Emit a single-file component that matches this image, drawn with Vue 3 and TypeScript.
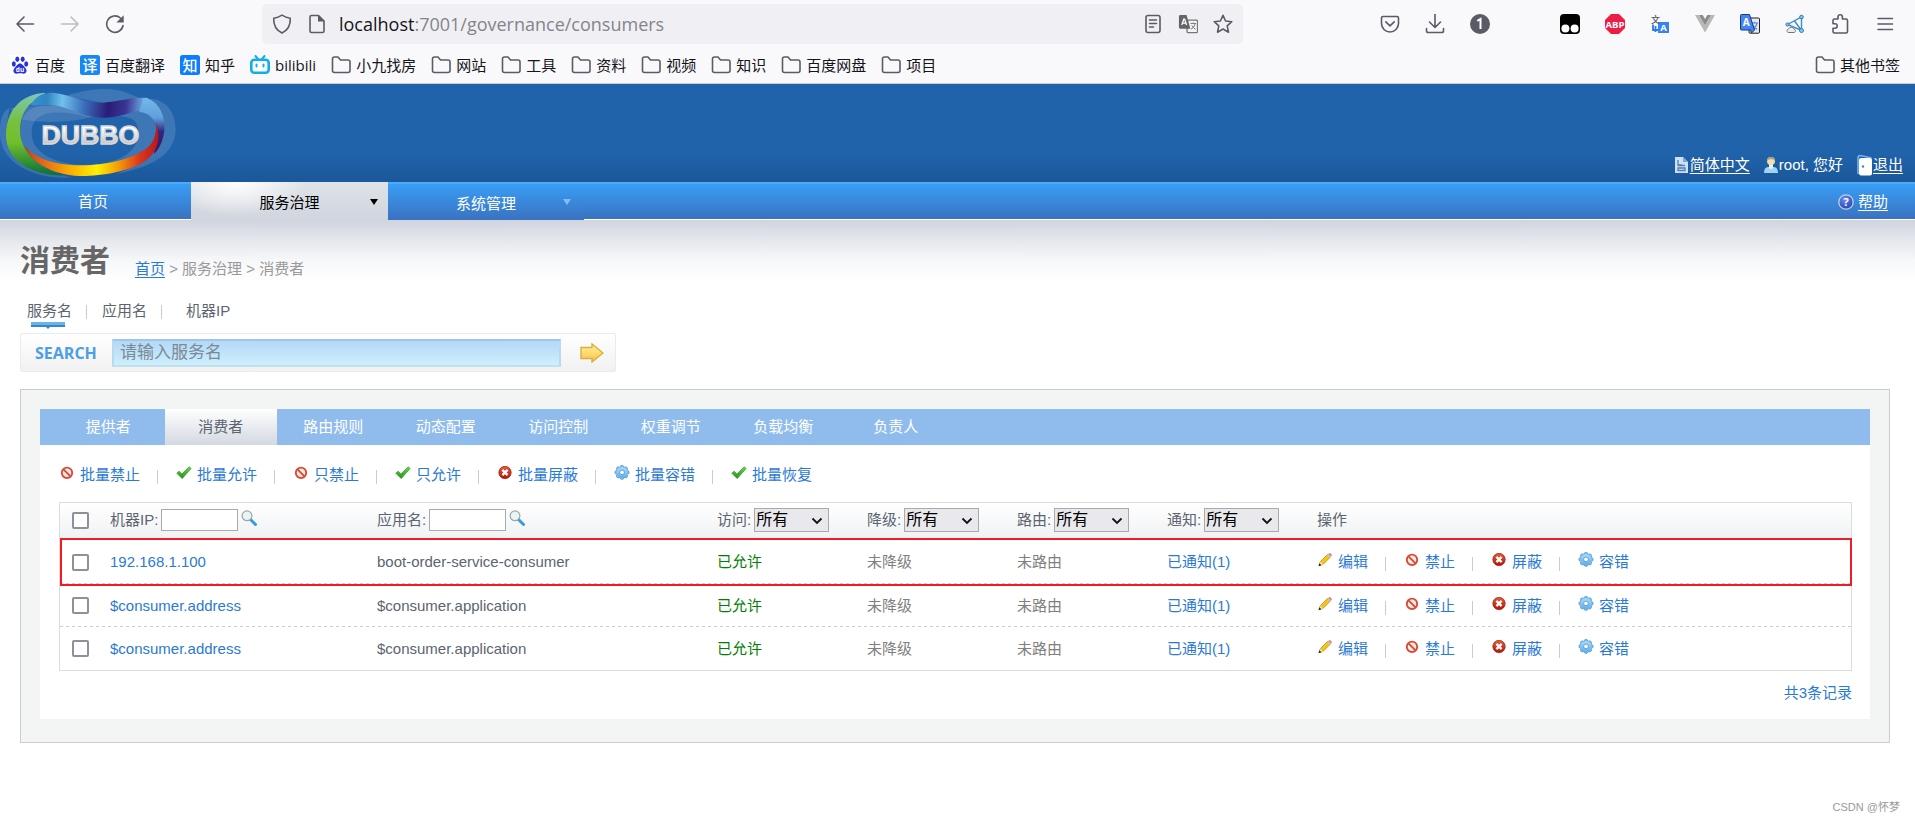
<script setup lang="ts">
import { ref } from 'vue'

interface Bookmark { label: string; icon: string }
interface Action { label: string; icon: string }
interface Consumer { address: string; application: string; marked: boolean }
interface Glyph { text: string; x: number; y: number; size: number; fill: string; cls: string }

const bookmarks: Bookmark[] = [
  { label: '百度', icon: 'baidu' },
  { label: '百度翻译', icon: 'fanyi' },
  { label: '知乎', icon: 'zhihu' },
  { label: 'bilibili', icon: 'bili' },
  { label: '小九找房', icon: 'folder' },
  { label: '网站', icon: 'folder' },
  { label: '工具', icon: 'folder' },
  { label: '资料', icon: 'folder' },
  { label: '视频', icon: 'folder' },
  { label: '知识', icon: 'folder' },
  { label: '百度网盘', icon: 'folder' },
  { label: '项目', icon: 'folder' },
]

const extensions: Action[] = [
  { label: 'Pocket', icon: 'pocket' },
  { label: '下载', icon: 'download' },
  { label: '账户', icon: 'account' },
  { label: '', icon: '' },
  { label: 'Tampermonkey', icon: 'monkey' },
  { label: 'Adblock Plus', icon: 'abp' },
  { label: '划词翻译', icon: 'lookup' },
  { label: 'Vue', icon: 'vue' },
  { label: '谷歌翻译', icon: 'gtrans' },
  { label: '网络', icon: 'network' },
  { label: '扩展', icon: 'puzzle' },
  { label: '菜单', icon: 'menu' },
]

// Lettering drawn on top of an icon's shape, in its 20×20 box
const glyphs: Record<string, Glyph[]> = {
  abp: [{ text: 'ABP', x: 10, y: 13.5, size: 9.5, fill: '#fff', cls: 'glyph' }],
  lookup: [
    { text: '文', x: 5.5, y: 9, size: 9, fill: '#555', cls: 'cjk' },
    { text: 'A', x: 13.5, y: 17, size: 9.5, fill: '#fff', cls: 'glyph' },
  ],
  gtrans: [{ text: 'A', x: 6.3, y: 12, size: 10, fill: '#fff', cls: 'glyph' }],
  baidu: [{ text: 'du', x: 10, y: 17, size: 6.5, fill: '#fff', cls: 'glyph' }],
  fanyi: [{ text: '译', x: 10, y: 15.5, size: 15, fill: '#fff', cls: 'cjk' }],
  zhihu: [{ text: '知', x: 10, y: 15.5, size: 15, fill: '#fff', cls: 'cjk' }],
}

const tabs = ['提供者', '消费者', '路由规则', '动态配置', '访问控制', '权重调节', '负载均衡', '负责人']
const activeTab = ref('消费者')

const batch: Action[] = [
  { label: '批量禁止', icon: 'ban' },
  { label: '批量允许', icon: 'tick' },
  { label: '只禁止', icon: 'ban' },
  { label: '只允许', icon: 'tick' },
  { label: '批量屏蔽', icon: 'cross' },
  { label: '批量容错', icon: 'gear' },
  { label: '批量恢复', icon: 'tick' },
]

const rowActions: Action[] = [
  { label: '编辑', icon: 'pencil' },
  { label: '禁止', icon: 'ban' },
  { label: '屏蔽', icon: 'cross' },
  { label: '容错', icon: 'gear' },
]

const textFilters = [
  { id: 'f-ip', label: '机器IP:' },
  { id: 'f-app', label: '应用名:' },
]
const selectFilters = [
  { id: 'f-access', label: '访问:' },
  { id: 'f-mock', label: '降级:' },
  { id: 'f-route', label: '路由:' },
  { id: 'f-notify', label: '通知:' },
]

const rows: Consumer[] = [
  { address: '192.168.1.100', application: 'boot-order-service-consumer', marked: true },
  { address: '$consumer.address', application: '$consumer.application', marked: false },
  { address: '$consumer.address', application: '$consumer.application', marked: false },
]

const keyword = ref('')
const url = { host: 'localhost', rest: ':7001/governance/consumers' }
</script>

<template>
  <svg class="sprite" aria-hidden="true">
    <defs>
      <linearGradient id="g-tick" x1="0" y1="0" x2="0" y2="1"><stop offset="0" stop-color="#6fdc4c" /><stop offset="1" stop-color="#1f8f1c" /></linearGradient>
      <linearGradient id="g-cross" x1="0" y1="0" x2="0" y2="1"><stop offset="0" stop-color="#e2603a" /><stop offset="1" stop-color="#b01508" /></linearGradient>
      <linearGradient id="g-gear" x1="0" y1="0" x2="0" y2="1"><stop offset="0" stop-color="#a9dbfb" /><stop offset="1" stop-color="#62aee8" /></linearGradient>
      <linearGradient id="g-arrow" x1="0" y1="0" x2="0" y2="1"><stop offset="0" stop-color="#ffef9a" /><stop offset=".6" stop-color="#ffd768" /><stop offset="1" stop-color="#ffb066" /></linearGradient>
      <radialGradient id="g-help" cx=".4" cy=".3" r=".8"><stop offset="0" stop-color="#6f8cf0" /><stop offset="1" stop-color="#1c3cae" /></radialGradient>
    </defs>
    <symbol id="i-back" viewBox="0 0 20 20"><path d="M18.500 10H2M9 3L2 10l7 7" class="ln" /></symbol>
    <symbol id="i-forward" viewBox="0 0 20 20"><path d="M1.500 10H18M11 3l7 7-7 7" class="ln" /></symbol>
    <symbol id="i-reload" viewBox="0 0 20 20"><path d="M18 11.500a8.200 8.200 0 1 1-2.600-7.500" class="ln" /><path d="M18.700 1.200v7.300h-7.300z" fill="currentColor" /></symbol>
    <symbol id="i-shield" viewBox="0 0 20 20"><path d="M10 1.200c2.500 1.600 5.200 2.600 8.300 3 .3 6.300-1.800 11.500-8.300 14.800C3.500 15.700 1.400 10.500 1.700 4.200c3.100-.4 5.800-1.400 8.300-3z" class="ln" /></symbol>
    <symbol id="i-page" viewBox="0 0 20 20"><path d="M4.500 1.500h7L17 7v10q0 1.500-1.500 1.500h-11Q3 18.500 3 17V3q0-1.500 1.500-1.500z" class="ln" /><path d="M11 1v6.500h6.500z" fill="currentColor" /></symbol>
    <symbol id="i-reader" viewBox="0 0 20 20"><rect x="3" y="1.500" width="14" height="17" rx="2" class="ln" /><path d="M6.500 6h7M6.500 9.500h7M6.500 13h4" class="ln" /></symbol>
    <symbol id="i-translate" viewBox="0 0 21 20">
      <rect x="9.500" y="6" width="11" height="13" rx="1" fill="#f4f4f6" stroke="#77777b" stroke-width="1.400" />
      <path d="M1 2q0-1.500 1.500-1.500H9L13 15H2.500Q1 15 1 13.500z" fill="#646468" />
      <path d="M4 11L6 5h1l2 6M4.700 9h3.500" fill="none" stroke="#fff" stroke-width="1.300" />
      <path d="M13 9.500h6M16 8.500v1M18 10q-1 4-4.500 5.500M14.500 11.500q1.500 3 4 4" fill="none" stroke="#77777b" />
    </symbol>
    <symbol id="i-star" viewBox="0 0 20 20"><path d="M10 1.300l2.600 5.700 6.200.7-4.600 4.200 1.300 6.300-5.500-3.200-5.500 3.200 1.300-6.300L1.200 7.700l6.200-.7z" class="ln" /></symbol>
    <symbol id="i-pocket" viewBox="0 0 20 20"><path d="M3 2.500h14q1.500 0 1.500 1.500v5.500a8.500 8.500 0 0 1-17 0V4Q1.500 2.500 3 2.500z" class="ln" /><path d="M5.800 7.800L10 11.800l4.200-4" class="ln" /></symbol>
    <symbol id="i-download" viewBox="0 0 20 20"><path d="M10 0v13M4.500 8L10 13.500 15.500 8M1.500 14.500v2.200q0 1.800 1.800 1.800h13.400q1.800 0 1.800-1.800v-2.200" class="ln" /></symbol>
    <symbol id="i-account" viewBox="0 0 20 20"><circle cx="10" cy="10" r="10" fill="#5b5b66" /><path d="M7.300 6.900L10.500 5v10" fill="none" stroke="#fff" stroke-width="2" /></symbol>
    <symbol id="i-monkey" viewBox="0 0 20 20"><rect width="20" height="20" rx="4" fill="#000" /><circle cx="5.400" cy="14.500" r="4" fill="#fff" /><circle cx="14.600" cy="14.500" r="4" fill="#fff" /></symbol>
    <symbol id="i-abp" viewBox="0 0 20 20"><path d="M6 0h8l6 6v8l-6 6H6l-6-6V6z" fill="#ed1e45" /></symbol>
    <symbol id="i-lookup" viewBox="0 0 20 20"><path d="M3 10.500v5.500h5M5.500 12v6" fill="none" stroke="#3178e8" stroke-width="1.800" /><rect x="8" y="8" width="11" height="11" fill="#3584f0" /></symbol>
    <symbol id="i-vue" viewBox="0 0 20 20"><path d="M0 1h4l6 10.300L16 1h4L10 18.500z" fill="#b8b8b8" /><path d="M4 1h3.700L10 5l2.300-4H16l-6 10.300z" fill="#8b8b8b" /></symbol>
    <symbol id="i-gtrans" viewBox="0 0 20 20"><rect x="9" y="4" width="10.500" height="15.200" rx="1" fill="#e9e9ec" stroke="#222" /><path d="M11 9h7M14.500 7.800V9M17 9.500q-1 4-4.500 6M12.700 11q1.500 3 4.500 4.500" fill="none" stroke="#4a84ee" stroke-width="1.200" /><path d="M1.500.5h8L14.500 16l-3 3-1-3h-9q-1 0-1-1V1.500q0-1 1-1z" fill="#4685f5" stroke="#173a7c" /></symbol>
    <symbol id="i-network" viewBox="0 0 20 20"><path d="M2.500 10.500L16.500 3v13.500zM9.500 7l7 9.500" fill="none" stroke="#3b8cc8" stroke-width="1.400" /><g fill="#8cc3e8" stroke="#2c7dbb"><circle cx="2.500" cy="10.500" r="1.600" /><circle cx="16.500" cy="3" r="1.800" /><circle cx="16.500" cy="16.500" r="2" /></g><path d="M3 18.500a2 2 0 0 1 .5-3.600 3 3 0 0 1 5.400 0 2 2 0 0 1 .6 3.600z" fill="#eee" stroke="#777" /></symbol>
    <symbol id="i-puzzle" viewBox="0 0 20 20"><path d="M8 5V3a2.200 2.200 0 0 1 4.400 0v2H16q1.500 0 1.500 1.500v11q0 1.500-1.500 1.500H4.500Q3 19 3 17.500v-3.300h2a2.200 2.200 0 0 0 0-4.400H3V6.500Q3 5 4.500 5z" class="ln" /></symbol>
    <symbol id="i-menu" viewBox="0 0 20 20"><path d="M3 4.500h14.500M3 10h14.500M3 15.500h14.500" class="ln" /></symbol>
    <symbol id="i-folder" viewBox="0 0 20 20"><path d="M1.500 4q0-2 2-2H7l2.500 3H17q2 0 2 2v8.500q0 2-2 2H3.500q-2 0-2-2z" class="ln" /></symbol>
    <symbol id="i-baidu" viewBox="0 0 20 20"><rect width="20" height="20" fill="#fff" /><g fill="#2a32e0"><ellipse cx="3.800" cy="9" rx="2" ry="2.700" /><ellipse cx="7.300" cy="4.300" rx="2" ry="2.700" /><ellipse cx="12.700" cy="4.300" rx="2" ry="2.700" /><ellipse cx="16.200" cy="9" rx="2" ry="2.700" /><path d="M10 8.500c2.500 0 3.500 2.600 5.200 4.200 2.500 2.500 1.300 6-1.700 6-1.300 0-2-.4-3.500-.4s-2.200.4-3.500.4c-3 0-4.200-3.500-1.700-6C6.500 11.100 7.500 8.500 10 8.500z" /></g></symbol>
    <symbol id="i-fanyi" viewBox="0 0 20 20"><rect width="20" height="20" rx="2.500" fill="#1687f5" /></symbol>
    <symbol id="i-zhihu" viewBox="0 0 20 20"><rect width="20" height="20" rx="2.500" fill="#0c7dff" /></symbol>
    <symbol id="i-bili" viewBox="0 0 20 20"><path d="M5.500 1l2.500 3M14.500 1L12 4" stroke="#10aeea" stroke-width="2" stroke-linecap="round" /><rect x="1.300" y="4.700" width="17.400" height="13" rx="3" fill="#fff" stroke="#10aeea" stroke-width="2.600" /><path d="M6.500 9.500v2M13.500 9.500v2" stroke="#10aeea" stroke-width="2" stroke-linecap="round" /></symbol>
    <symbol id="i-ban" viewBox="0 0 16 16"><circle cx="8" cy="6.800" r="5.200" fill="#fdeee9" stroke="#dc4a34" stroke-width="1.900" /><path d="M4.500 3.300l7 7" stroke="#dc4a34" stroke-width="1.900" /></symbol>
    <symbol id="i-tick" viewBox="0 0 16 16"><path d="M.8 7.200l2.400-2 2.700 2.900 7.200-7.300 2 1.700L6.200 12.600z" fill="url(#g-tick)" stroke="#2b9423" stroke-width=".7" /></symbol>
    <symbol id="i-cross" viewBox="0 0 16 16"><circle cx="8" cy="6.500" r="6.200" fill="url(#g-cross)" stroke="#a01a0c" stroke-width=".7" /><path d="M5.400 3.900l5.200 5.200M10.600 3.900L5.400 9.100" stroke="#fff" stroke-width="2.300" /></symbol>
    <symbol id="i-gear" viewBox="0 0 16 16" overflow="visible">
      <g fill="#7fc0f2" stroke="#4c94d2" stroke-width=".8"><circle cx="8" cy="1.300" r="1.900" /><circle cx="11.600" cy="2.800" r="1.900" /><circle cx="13.200" cy="6.400" r="1.900" /><circle cx="11.600" cy="10" r="1.900" /><circle cx="8" cy="11.500" r="1.900" /><circle cx="4.400" cy="10" r="1.900" /><circle cx="2.800" cy="6.400" r="1.900" /><circle cx="4.400" cy="2.800" r="1.900" /></g>
      <circle cx="8" cy="6.400" r="5.500" fill="url(#g-gear)" /><circle cx="8" cy="6.400" r="2.300" fill="#fff" stroke="#4c94d2" stroke-width=".8" />
    </symbol>
    <symbol id="i-pencil" viewBox="0 0 16 16"><path d="M2 12.700l1.300-4 7.600-7.600 2.800 2.600L6 11.400z" fill="#f5c51a" stroke="#b98a14" stroke-width=".8" /><path d="M3.300 8.700L2 12.700l4-1.300z" fill="#f3dcb4" /><path d="M1.500 13.200l.9-3 2 2z" fill="#222" /><path d="M10 2l1.200-1.200 2.800 2.700-1.200 1.200z" fill="#bfc4c9" /><path d="M11.400.7q1.400-1 2.600.2t.2 2.400z" fill="#e25a4a" /></symbol>
    <symbol id="i-lens" viewBox="0 0 16 16"><path d="M9.500 9.500l5 5" stroke="#3a9ae0" stroke-width="3" stroke-linecap="round" /><circle cx="6" cy="5.800" r="4.900" fill="#e9f5f4" stroke="#98a9ac" stroke-width="1.200" /></symbol>
    <symbol id="i-doc" viewBox="0 0 16 18"><path d="M1 1h8l5 5v11H1z" fill="#cfe0f3" /><path d="M9 1v5h5" fill="#7fa6d3" /><path d="M4 4v5h4M4 9.500h7M4 12h7v2.500H4z" fill="none" stroke="#4f7fb5" stroke-width="1.300" /></symbol>
    <symbol id="i-user" viewBox="0 0 16 18"><path d="M1 17c0-4 1.500-6 4-6h6c2.500 0 4 2 4 6z" fill="#9fd4f2" /><path d="M6 8h4v4l-2 1.500L6 12z" fill="#e8f2f6" /><circle cx="8" cy="5" r="4" fill="#f4dfae" /><path d="M4 5a4 4 0 0 1 8 0q-2-2-4-2T4 5z" fill="#a8a082" /></symbol>
    <symbol id="i-door" viewBox="0 0 17 22"><path d="M2 20V4q0-2.500 2.500-2.500L15.500 4" fill="none" stroke="#79b3ee" stroke-width="1.600" /><rect x="3" y="4" width="13" height="17.500" rx="2" fill="#fff" /><circle cx="7" cy="12.500" r="1.200" fill="#3584d4" /></symbol>
    <symbol id="i-go" viewBox="0 0 24 20"><path d="M1 4.500h11V1L23 10 12 19v-3.500H1z" fill="url(#g-arrow)" stroke="#d9b040" stroke-width="1.400" /></symbol>
    <symbol id="i-caret" viewBox="0 0 12 8"><path d="M1.500 1.500L6 6l4.500-4.500" fill="none" stroke="#111" stroke-width="1.800" /></symbol>
  </svg>

  <div class="browser">
    <div class="toolbar">
      <div class="slots">
        <button class="slot" aria-label="后退"><svg class="ic20"><use href="#i-back" /></svg></button>
        <button class="slot dim" aria-label="前进"><svg class="ic20"><use href="#i-forward" /></svg></button>
        <button class="slot" aria-label="刷新"><svg class="ic20"><use href="#i-reload" /></svg></button>
      </div>
      <div class="urlbar">
        <svg class="ic20"><use href="#i-shield" /></svg>
        <svg class="ic20"><use href="#i-page" /></svg>
        <span class="url"><span class="host">{{ url.host }}</span>{{ url.rest }}</span>
        <svg class="ic20"><use href="#i-reader" /></svg>
        <svg class="ic20"><use href="#i-translate" /></svg>
        <svg class="ic20"><use href="#i-star" /></svg>
      </div>
      <div class="slots">
        <template v-for="(e, i) in extensions" :key="i">
          <button v-if="e.icon" class="slot" :aria-label="e.label">
            <svg class="ic20" viewBox="0 0 20 20">
              <use :href="`#i-${e.icon}`" />
              <text v-for="g in glyphs[e.icon]" :key="g.text" :x="g.x" :y="g.y" :font-size="g.size" :fill="g.fill" :class="g.cls" text-anchor="middle">{{ g.text }}</text>
            </svg>
          </button>
          <span v-else class="slot"></span>
        </template>
      </div>
    </div>
    <nav class="bookmarks">
      <a v-for="b in bookmarks" :key="b.label" href="#" class="bookmark">
        <svg class="ic20" viewBox="0 0 20 20">
          <use :href="`#i-${b.icon}`" />
          <text v-for="g in glyphs[b.icon]" :key="g.text" :x="g.x" :y="g.y" :font-size="g.size" :fill="g.fill" :class="g.cls" text-anchor="middle">{{ g.text }}</text>
        </svg>{{ b.label }}</a>
      <a href="#" class="bookmark other"><svg class="ic20"><use href="#i-folder" /></svg>其他书签</a>
    </nav>
  </div>

  <header class="banner">
    <svg class="logo" viewBox="0 12 600 294" role="img" aria-label="DUBBO">
      <defs>
        <linearGradient id="l-green" x1="0" y1="0" x2="0" y2="1"><stop offset="0" stop-color="#7cc8c0" /><stop offset=".35" stop-color="#78c03c" /><stop offset=".6" stop-color="#72bf2c" /><stop offset="1" stop-color="#06703a" /></linearGradient>
        <linearGradient id="l-blue" gradientUnits="userSpaceOnUse" x1="90" y1="60" x2="450" y2="90"><stop offset="0" stop-color="#3a92cf" /><stop offset=".14" stop-color="#2f86c4" /><stop offset=".27" stop-color="#72c0ee" /><stop offset=".45" stop-color="#3a6fbb" /><stop offset=".65" stop-color="#2a1c78" /><stop offset=".8" stop-color="#3b3693" /><stop offset=".95" stop-color="#6cb0e4" /></linearGradient>
        <linearGradient id="l-right" x1="0" y1="0" x2="0" y2="1"><stop offset="0" stop-color="#74b8e8" /><stop offset=".35" stop-color="#5f9fdc" /><stop offset=".6" stop-color="#30287f" /><stop offset="1" stop-color="#3a1468" /></linearGradient>
        <linearGradient id="l-fire" gradientUnits="userSpaceOnUse" x1="72" y1="0" x2="478" y2="0"><stop offset="0" stop-color="#a8441c" /><stop offset=".1" stop-color="#e05a1e" /><stop offset=".32" stop-color="#f9a800" /><stop offset=".54" stop-color="#fff000" /><stop offset=".7" stop-color="#f29a08" /><stop offset=".85" stop-color="#dc3a1c" /><stop offset="1" stop-color="#b5161c" /></linearGradient>
        <linearGradient id="l-text" x1="0" y1="0" x2="0" y2="1"><stop offset=".25" stop-color="#fff" /><stop offset=".85" stop-color="#bdbdbd" /></linearGradient>
      </defs>
      <g fill="#a9bedb" fill-opacity=".22">
        <path d="M190 48C230 40 260 28 310 27C380 27 395 50 430 56C500 50 527 100 527 150C525 225 450 262 350 282L440 240L490 150L440 56L310 68Z" />
        <path d="M28 84C0 95-4 150 2 180C15 255 110 300 215 292L190 286C80 280 15 220 18 150Z" />
        <path d="M30 86C80 75 120 82 190 75L290 105C230 130 120 130 62 118Z" />
        <path fill-rule="evenodd" d="M60 160C60 80 110 70 200 72C330 90 460 50 470 150C475 230 380 260 260 262C120 262 60 230 60 160ZM95 160C95 230 190 255 250 255C350 255 420 220 415 150C410 90 330 114 270 112C180 90 95 85 95 160Z" />
      </g>
      <path fill="url(#l-green)" d="M135 38C60 42 18 95 18 165C18 240 90 285 190 287C120 262 62 220 60 155C60 105 80 66 130 50Z" />
      <path fill="url(#l-blue)" d="M92 76C105 50 130 36 165 39C215 46 255 70 310 68C360 64 400 50 445 54L432 90C390 95 355 115 305 113C240 110 215 84 170 77C135 72 110 80 92 76Z" />
      <path fill="url(#l-right)" d="M430 54C475 56 498 110 493 150C490 180 480 205 462 222L471 150C466 120 450 98 418 96Z" />
      <path fill="url(#l-fire)" d="M72 195C100 230 150 255 240 256C330 256 400 235 440 205C462 188 468 165 470 130C482 180 474 212 440 240C390 275 300 289 240 288C150 285 85 240 72 195Z" />
      <text x="271" y="193" text-anchor="middle" class="wordmark" fill="url(#l-text)" stroke="#d8d8d8" stroke-width="4">DUBBO</text>
    </svg>
    <div class="account">
      <span class="acct"><svg class="doc"><use href="#i-doc" /></svg><a href="#">简体中文</a></span>
      <span class="acct"><svg class="doc"><use href="#i-user" /></svg>root, 您好</span>
      <span class="acct"><svg class="door"><use href="#i-door" /></svg><a href="#">退出</a></span>
    </div>
  </header>

  <nav class="mainnav">
    <a href="#" class="home">首页</a>
    <a href="#" class="drop active">服务治理<span class="tri"></span></a>
    <a href="#" class="drop last">系统管理<span class="tri"></span></a>
    <span class="help">
      <svg class="ic16" viewBox="0 0 16 16"><circle cx="8" cy="8" r="7.200" fill="url(#g-help)" stroke="#c4cfe4" stroke-width="1.300" /><text x="8" y="12" text-anchor="middle" class="glyph" font-size="11" fill="#fff">?</text></svg>
      <a href="#">帮助</a>
    </span>
  </nav>

  <main class="page">
    <div class="heading">
      <h1>消费者</h1>
      <p class="crumbs"><a href="#">首页</a> &gt; 服务治理 &gt; 消费者</p>
    </div>

    <div class="modes">
      <a href="#" class="mode on">服务名</a>
      <a href="#" class="mode">应用名</a>
      <a href="#" class="mode wide">机器IP</a>
    </div>

    <form class="search" @submit.prevent>
      <label for="kw">SEARCH</label>
      <input id="kw" v-model="keyword" type="text" placeholder="请输入服务名" />
      <button type="submit" aria-label="搜索"><svg class="go"><use href="#i-go" /></svg></button>
    </form>

    <section class="panel">
      <div class="sheet">
        <div class="tabs">
          <button v-for="t in tabs" :key="t" type="button" :class="{ on: t === activeTab }" @click="activeTab = t">{{ t }}</button>
        </div>
        <div class="body">
          <div class="actions batch">
            <a v-for="a in batch" :key="a.label" href="#"><svg class="ic16"><use :href="`#i-${a.icon}`" /></svg>{{ a.label }}</a>
          </div>
          <table>
            <colgroup>
              <col class="c-check" /><col class="c-ip" /><col class="c-app" />
              <col class="c-state" /><col class="c-state" /><col class="c-state" /><col class="c-state" /><col />
            </colgroup>
            <thead>
              <tr>
                <th><input type="checkbox" aria-label="全选" /></th>
                <th v-for="f in textFilters" :key="f.id">
                  <span class="filter"><label :for="f.id">{{ f.label }}</label><input :id="f.id" type="text" /><svg class="ic16 lens"><use href="#i-lens" /></svg></span>
                </th>
                <th v-for="f in selectFilters" :key="f.id">
                  <span class="filter"><label :for="f.id">{{ f.label }}</label><span class="pick"><select :id="f.id"><option>所有</option></select><svg><use href="#i-caret" /></svg></span></span>
                </th>
                <th>操作</th>
              </tr>
            </thead>
            <tbody>
              <tr v-for="(r, i) in rows" :key="i" :class="{ marked: r.marked }">
                <td><input type="checkbox" :aria-label="r.address" /></td>
                <td><a href="#">{{ r.address }}</a></td>
                <td>{{ r.application }}</td>
                <td class="ok">已允许</td>
                <td class="none">未降级</td>
                <td class="none">未路由</td>
                <td><a href="#">已通知(1)</a></td>
                <td>
                  <div class="actions">
                    <a v-for="a in rowActions" :key="a.label" href="#"><svg class="ic16"><use :href="`#i-${a.icon}`" /></svg>{{ a.label }}</a>
                  </div>
                </td>
              </tr>
            </tbody>
          </table>
          <p class="total">共3条记录</p>
        </div>
      </div>
    </section>
  </main>
  <footer class="credit">CSDN @怀梦</footer>
</template>

<style>
body {
  margin: 0;
  background: #fff;
  color: #5b6570;
  font: 15px/20px "Liberation Sans", "Noto Sans CJK SC", sans-serif;
}
.ln { fill: none; stroke: currentColor; stroke-width: 1.6; stroke-linecap: round; stroke-linejoin: round; }
.glyph { font-family: "Open Sans", "Noto Sans", sans-serif; font-weight: 700; }
.cjk { font-family: "Noto Sans CJK SC", sans-serif; font-weight: 500; }
</style>

<style scoped>
* { box-sizing: border-box; }
svg { display: block; flex: none; }
button { padding: 0; border: 0; background: none; font: inherit; color: inherit; cursor: pointer; }
a { color: #2a7ad5; text-decoration: none; }
h1, p { margin: 0; }
.sprite { position: absolute; width: 0; height: 0; }
.ic16 { width: 16px; height: 16px; overflow: visible; }
.ic20 { width: 20px; height: 20px; }

.browser {
  background: #f9f9fb;
  border-bottom: 1px solid #ccc;
  color: #5b5b66;
  font-family: "Open Sans", "Noto Sans CJK SC", sans-serif;
}
.toolbar { display: flex; align-items: center; height: 47px; padding: 0 8px 0 2px; }
.slots { display: flex; }
.slot { display: flex; align-items: center; justify-content: center; width: 45px; height: 40px; }
.dim { color: #bcbcc2; }
.urlbar {
  display: flex;
  flex: 1;
  align-items: center;
  gap: 15px;
  height: 40px;
  margin: 0 124px 0 125px;
  padding: 0 10px;
  border-radius: 5px;
  background: #f0f0f4;
}
.url { flex: 1; margin-left: -3px; color: #84848c; font-size: 18px; line-height: 24px; }
.host { color: #15141a; }
.bookmarks { display: flex; align-items: center; gap: 15px; height: 36px; padding: 0 15px 0 10px; }
.bookmark { display: flex; align-items: center; gap: 5px; color: #15141a; }
.bookmark svg { color: #5b5b66; }
.other { margin-left: auto; }

.banner {
  display: flex;
  align-items: flex-end;
  justify-content: space-between;
  height: 98px;
  background: linear-gradient(#2063ab, #2063ab 70%, #1b579a);
  color: #fff;
}
.logo { width: 200px; height: 98px; }
.wordmark { font: 700 80px "Liberation Sans", sans-serif; }
.account { display: flex; gap: 13px; padding: 0 12px 6px 0; }
.account a, .help a { color: #fff; text-decoration: underline; text-underline-offset: 3px; }
.acct { display: flex; align-items: center; }
.doc { width: 16px; height: 18px; }
.door { width: 17px; height: 22px; }

.mainnav {
  display: flex;
  height: 38px;
  border-top: 2px solid #4daaf5;
  background: linear-gradient(#389ef6, #3a72c0) no-repeat 0 0 / 100% 35px #fff;
}
.mainnav > a { display: flex; align-items: center; justify-content: center; height: 36px; color: #fff; }
.mainnav > .home { width: 191px; padding: 0 5px 1px 0; }
.mainnav > .drop { position: relative; width: 197px; }
.mainnav > .active {
  height: 38px;
  margin-top: -2px;
  padding: 3px 0 0;
  background: radial-gradient(ellipse 70px 34px at 45px 0, #fff, transparent), linear-gradient(#dfe3e8, #d0d5de);
  color: #000;
}
.mainnav > .last { width: 196px; padding-top: 4px; background: linear-gradient(#389ef6, #3a72c0); }
.tri { position: absolute; right: 10px; top: 15px; border: 4px solid transparent; border-top: 6px solid #000; border-bottom: 0; }
.active .tri { top: 17px; }
.last .tri { right: 13px; border-top-color: #7cc0f7; }
.help { display: flex; align-items: center; gap: 4px; margin-left: auto; padding: 0 27px 0 0; }

.page { padding: 20px 25px 0 20px; background: linear-gradient(#cfd4de, #e4e7ec 20px, #f6f7f9 40px, #fff 62px); }
.heading { display: flex; align-items: center; height: 40px; }
h1 { padding-top: 2px; font-size: 30px; line-height: 40px; color: #666; font-weight: 700; }
.crumbs { margin: 18px 0 0 25px; color: #999; }
.crumbs a { text-decoration: underline; text-underline-offset: 3px; }
.modes { display: flex; align-items: center; height: 26px; margin-top: 18px; padding-left: 7px; }
.mode { position: relative; color: #5b6570; }
.mode + .mode { margin-left: 15px; padding-left: 15px; }
.mode + .mode::before { content: ""; position: absolute; left: -1px; top: 4px; height: 14px; border-left: 1px solid #ccc; }
.mode + .wide { padding-left: 24px; }
.on.mode::before { content: ""; position: absolute; left: 4px; top: 21px; width: 34px; height: 5px; background: linear-gradient(#66b2f2 3px, #3d86c4 3px); }
.on.mode::after { content: ""; position: absolute; left: 19px; top: 26px; border: 2px solid transparent; border-top: 2px solid #3d86c4; border-bottom: 0; }

.search {
  display: flex;
  align-items: center;
  width: 596px;
  height: 39px;
  margin-top: 9px;
  border: 1px solid #e9ecec;
  border-radius: 2px;
  background: linear-gradient(#fff, #f1f1f1);
}
.search label { width: 91px; padding-left: 14px; color: #4b9fe8; font: 700 16px/24px "Open Sans", sans-serif; }
.search input {
  flex: 1;
  height: 28px;
  padding: 0 6px;
  border: 2px solid;
  border-color: #a2c6e6 #b8daf0 #bfe0ec;
  outline: 0;
  background: linear-gradient(#b4d8f7, #cdeffd);
  color: #333;
  font: 17px/24px "Liberation Sans", "Noto Sans CJK SC", sans-serif;
}
.search input::placeholder { color: #7a8a96; opacity: 1; }
.search button { display: flex; justify-content: center; width: 54px; padding-left: 7px; }
.go { width: 24px; height: 20px; }

.panel { margin-top: 17px; padding: 19px 19px 23px; border: 1px solid #ccc; background: #f2f5f4; }
.sheet { background: #fff; }
.tabs { display: flex; height: 36px; padding-left: 12px; background: #8fbcec; color: #fff; }
.tabs button { width: 7.5em; }
.tabs .on { background: linear-gradient(#fff, #d3d8e1); color: #5b6570; }
.body { padding: 0 18px 4px 19px; }
.actions { display: flex; align-items: center; }
.actions a { position: relative; display: flex; align-items: center; gap: 5px; }
.actions svg { margin-bottom: 2px; }
.actions a + a { margin-left: 36px; }
.actions a + a::before { content: ""; position: absolute; left: -19px; top: 5px; height: 14px; border-left: 1px solid #ccc; }
.batch { height: 57px; padding-top: 2px; }

table { width: 100%; table-layout: fixed; border-collapse: separate; border-spacing: 0; border: 1px solid #dcdcdc; }
.c-check { width: 38px; }
.c-ip { width: 267px; }
.c-app { width: 340px; }
.c-state { width: 150px; }
th, td { height: 43px; padding: 0 0 0 12px; text-align: left; vertical-align: middle; font-weight: 400; white-space: nowrap; }
th { height: 37px; padding-bottom: 3px; }
thead tr { background: linear-gradient(#fff, #eff1f3); }
tbody tr:not(:last-child) { background: repeating-linear-gradient(90deg, #ccc 0 3px, transparent 3px 6px) no-repeat 0 100% / 100% 1px; }
.marked { position: relative; }
.marked td { height: 44px; }
.marked td:first-child::after { content: ""; position: absolute; inset: -2px -1px -2px 0; border: 2px solid #ee1c25; pointer-events: none; }
.ok { color: #008000; }
.none { color: #808080; }
input[type="checkbox"] { display: block; appearance: none; width: 17px; height: 17px; margin: 0; border: 2px solid #8f8f9d; border-radius: 2px; background: #fff; }
.filter { display: flex; align-items: center; gap: 3px; }
.filter input { width: 77px; height: 22px; padding: 1px 4px; border: 1px solid #aaa; background: #fff; font: inherit; }
.lens { margin-bottom: 4px; }
.pick { position: relative; display: block; }
.pick select { display: block; appearance: none; width: 75px; height: 24px; padding: 0 0 0 1px; border: 1px solid #aaa; border-radius: 0; background: #e9e9ed; color: #000; font: 16px/22px "Liberation Sans", "Noto Sans CJK SC", sans-serif; }
.pick svg { position: absolute; right: 6px; top: 9px; width: 12px; height: 8px; pointer-events: none; }
.total { padding: 12px 0; text-align: right; color: #2a7ad5; }
.credit { padding: 54px 15px 5px; text-align: right; color: #999; font-size: 11px; }
</style>
